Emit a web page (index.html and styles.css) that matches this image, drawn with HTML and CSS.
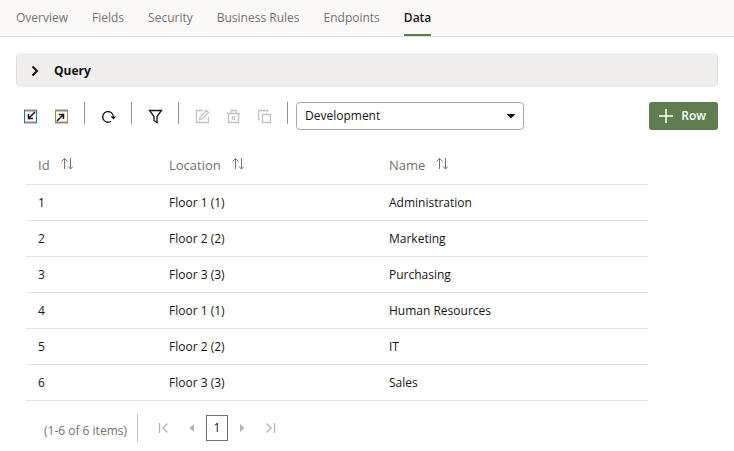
FILE: index.html
```html
<!DOCTYPE html>
<html lang="en">
<head>
<meta charset="utf-8">
<title>Department Data</title>
<link rel="stylesheet" href="styles.css">
</head>
<body>
<svg class="sprite" aria-hidden="true">
  <symbol id="sort" viewBox="0 0 12 14"><path d="M3.5 12V1.5M.5 4.5l3-3 3 3M9.5 1v11M7 9.5l2.5 2.5 2.5-2.5"/></symbol>
</svg>
<nav class="tabs">
  <a href="#overview">Overview</a>
  <a href="#fields">Fields</a>
  <a href="#security">Security</a>
  <a href="#rules">Business Rules</a>
  <a href="#endpoints">Endpoints</a>
  <a href="#data" class="active" aria-current="page">Data</a>
</nav>
<main>
  <button class="query" type="button" aria-expanded="false">
    <svg width="8" height="12" viewBox="0 0 8 12"><path d="M1.5 1.5L6 6l-4.5 4.5"/></svg>
    Query
  </button>
  <div class="toolbar">
    <button class="tool" type="button" aria-label="Import from file"><svg viewBox="0 0 15 15"><path class="edge" d="M1 1.5h13M1 13.5h13"/><path class="side-in" d="M1.5 1v13M13.5 1v13"/><path class="arrow" d="M12 3L6 9M5.5 5v4.5H10"/></svg></button>
    <button class="tool" type="button" aria-label="Export to file"><svg viewBox="0 0 15 15"><path class="edge" d="M1 1.5h13M1 13.5h13"/><path class="side-out" d="M1.5 1v13M13.5 1v13"/><path class="arrow" d="M3 12l6-6M5 5.5h4.5V10"/></svg></button>
    <span class="divider"></span>
    <button class="tool" type="button" aria-label="Reload"><svg viewBox="0 0 15 15"><path class="round" d="M10 12.3A5.3 5.3 0 1 1 12.3 8"/><path class="solid" d="M9.5 7.5h5.5l-2.5 3z"/></svg></button>
    <span class="divider"></span>
    <button class="tool" type="button" aria-label="Filter"><svg viewBox="0 0 15 15"><path class="round" d="M1.5 1.5h12L9 7.5v6l-3-2v-4z"/></svg></button>
    <span class="divider"></span>
    <button class="tool" type="button" aria-label="Edit row" disabled><svg viewBox="0 0 15 15"><path class="round" d="M8 1.5H1.5v12h12V8M4.5 10.5l.5-2.5 6.5-6.5 2 2L7 10z"/></svg></button>
    <button class="tool" type="button" aria-label="Delete row" disabled><svg viewBox="0 0 15 15"><path class="round" d="M1 4.5h13M5 4.5v-3h5v3M2.5 4.5v9h10v-9M6.5 7v4M8.5 7v4"/></svg></button>
    <button class="tool" type="button" aria-label="Duplicate row" disabled><svg viewBox="0 0 15 15"><path class="round" d="M3 10.5H1.5v-9h9V3M5.5 5.5h8v8h-8z"/></svg></button>
    <span class="divider"></span>
    <span class="picker">
      <select aria-label="Environment"><option>Development</option></select>
      <svg width="10" height="5" viewBox="0 0 10 5"><path d="M.5 0h9L5 4.5z"/></svg>
    </span>
    <button class="add" type="button"><svg width="14" height="14" viewBox="0 0 14 14"><path d="M7 0v14M0 7h14"/></svg>Row</button>
  </div>
  <div class="grid">
    <table>
      <thead>
        <tr>
          <th class="id" scope="col">Id<svg><use href="#sort"/></svg></th>
          <th class="location" scope="col">Location<svg><use href="#sort"/></svg></th>
          <th scope="col">Name<svg><use href="#sort"/></svg></th>
        </tr>
      </thead>
      <tbody>
        <tr><td>1</td><td>Floor 1 (1)</td><td>Administration</td></tr>
        <tr><td>2</td><td>Floor 2 (2)</td><td>Marketing</td></tr>
        <tr><td>3</td><td>Floor 3 (3)</td><td>Purchasing</td></tr>
        <tr><td>4</td><td>Floor 1 (1)</td><td>Human Resources</td></tr>
        <tr><td>5</td><td>Floor 2 (2)</td><td>IT</td></tr>
        <tr><td>6</td><td>Floor 3 (3)</td><td>Sales</td></tr>
      </tbody>
    </table>
    <div class="pager">
      <span class="count">(1-6 of 6 items)</span>
      <button type="button" aria-label="First page" disabled><svg viewBox="0 0 12 12"><path class="round" d="M1.5 1v10M9.5 1.5L5 6l4.5 4.5"/></svg></button>
      <button type="button" aria-label="Previous page" disabled><svg viewBox="0 0 12 12"><path class="solid" d="M8 2v8L3.5 6z"/></svg></button>
      <button type="button" class="current" aria-current="page">1</button>
      <button type="button" aria-label="Next page" disabled><svg viewBox="0 0 12 12"><path class="solid" d="M4 2v8l4.5-4z"/></svg></button>
      <button type="button" aria-label="Last page" disabled><svg viewBox="0 0 12 12"><path class="round" d="M10.5 1v10M2.5 1.5L7 6l-4.5 4.5"/></svg></button>
    </div>
  </div>
</main>
</body>
</html>
```
FILE: styles.css
```css
* {
  box-sizing: border-box;
}

body {
  margin: 0;
  background: #fff;
  color: #161513;
  font: 12px/16px "Open Sans", "Noto Sans", sans-serif;
}

button,
select {
  margin: 0;
  padding: 0;
  border: 0;
  background: none;
  color: inherit;
  font: inherit;
}

svg {
  display: block;
  flex: none;
  fill: none;
  stroke: currentColor;
}

.sprite {
  position: absolute;
  width: 0;
  height: 0;
}

.solid {
  fill: currentColor;
  stroke: none;
}

.round {
  stroke-width: 1.3px;
}

.tabs {
  display: flex;
  gap: 24px;
  padding: 0 16px;
  border-bottom: 1px solid #e0dfdd;
  background: #faf9f7;
}

.tabs a {
  padding: 10px 0 8px;
  border-bottom: 2px solid transparent;
  color: #74716e;
  text-decoration: none;
}

.tabs .active {
  border-color: #5a7a46;
  color: #161513;
  font-weight: 600;
}

main {
  padding: 16px;
}

.query {
  display: flex;
  align-items: center;
  gap: 15px;
  width: 100%;
  height: 34px;
  padding: 2px 14px 0;
  border: 1px solid #dedddb;
  border-width: 0 1px;
  border-radius: 5px;
  background: #efeeec;
  font-weight: 700;
}

.query svg {
  stroke-width: 2;
}

.toolbar {
  display: flex;
  align-items: center;
  margin: 15px 0 0 -1px;
}

.tool {
  display: grid;
  place-items: center start;
  width: 31px;
  height: 28px;
  padding-left: 8px;
}

.tool svg {
  width: 15px;
  height: 15px;
}

.tool .edge {
  stroke: #8c8986;
  stroke-width: 2px;
}

.tool .side-in {
  stroke: #2a7298;
}

.tool .side-out {
  stroke: #b98432;
}

.tool .arrow {
  stroke-width: 1.5px;
}

.tool:disabled {
  color: #c4c2c0;
}

.divider {
  align-self: flex-start;
  width: 1px;
  height: 22px;
  margin: 0 8px 0 7px;
  background: #98928d;
}

.picker {
  display: grid;
  flex: 0 1 228px;
  align-items: center;
}

.picker select,
.picker svg {
  grid-area: 1 / 1;
}

.picker select {
  appearance: none;
  height: 28px;
  padding: 0 24px 0 8px;
  border: 1px solid #aaa8a6;
  border-radius: 4px;
}

.picker svg {
  justify-self: end;
  margin-right: 8px;
  fill: #161513;
  stroke: none;
  pointer-events: none;
}

.add {
  display: flex;
  align-items: center;
  gap: 8px;
  height: 28px;
  margin-left: auto;
  padding: 0 12px 0 10px;
  border-radius: 3px;
  background: #5f7d4f;
  color: #fff;
  font-weight: 600;
}

.add svg {
  stroke-width: 1.5;
}

.grid {
  margin: 17px 70px 0 10px;
}

table {
  width: 100%;
  border-collapse: collapse;
  table-layout: fixed;
}

th,
td {
  height: 36px;
  padding: 2px 12px 0;
  border-bottom: 1px solid #e6e5e3;
  text-align: left;
}

th {
  height: 37px;
  padding-top: 0;
  color: #74716e;
  font-size: 13px;
  font-weight: 400;
}

th svg {
  display: inline-block;
  width: 12px;
  height: 14px;
  margin-left: 11px;
  vertical-align: -1px;
}

.id {
  width: 131px;
}

.location {
  width: 220px;
}

.pager {
  display: flex;
  align-items: center;
  margin-top: 13px;
  padding-left: 18px;
}

.pager button {
  display: grid;
  place-items: center;
  width: 28px;
  height: 26px;
}

.pager button:disabled {
  color: #b5b3b1;
}

.pager svg {
  width: 12px;
  height: 12px;
}

.pager .count {
  margin-right: 12px;
  padding: 9px 10px 3px 0;
  border-right: 1px solid #c6c4c2;
  color: #74716e;
}

.pager .current {
  width: 22px;
  border: 1px solid #74716e;
}
```
